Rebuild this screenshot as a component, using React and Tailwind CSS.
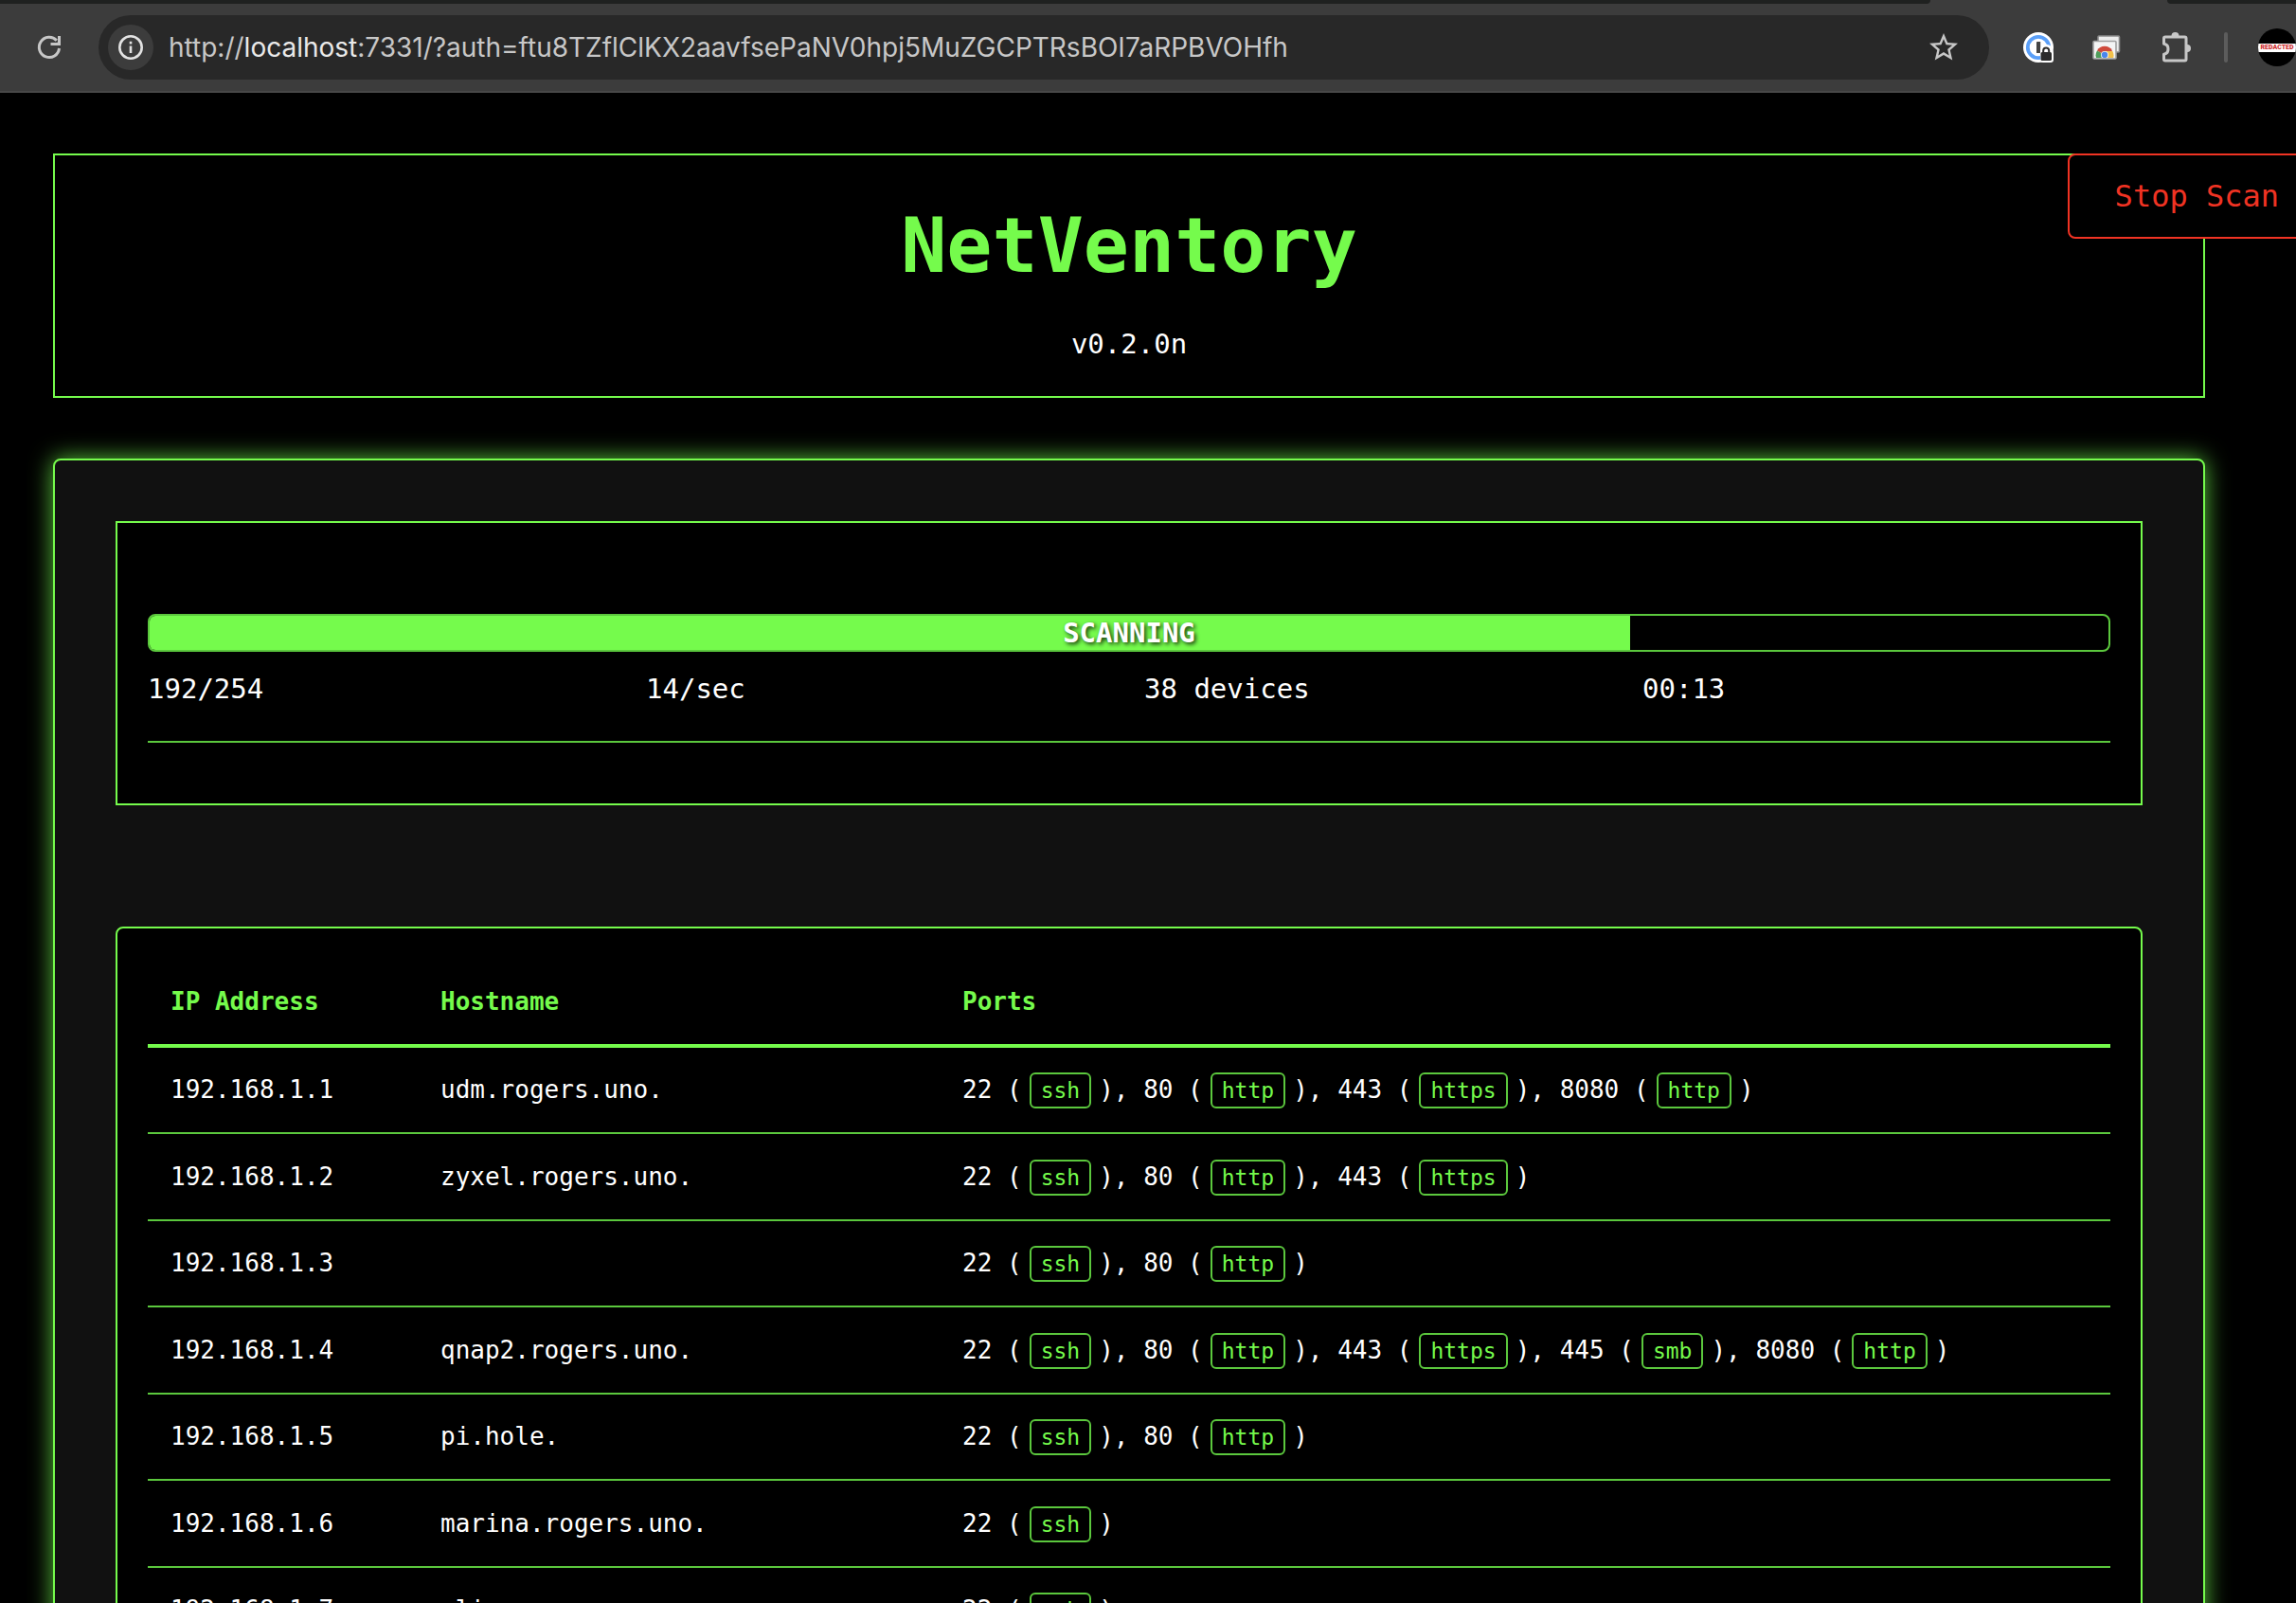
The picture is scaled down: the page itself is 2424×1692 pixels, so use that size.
const GREEN_BADGE =
  "mx-2 rounded-md border-2 border-[#5bc73d] px-2.5 py-1 text-[23px] leading-none text-[#75fb4c]";

const SERVICES = { 22: "ssh", 80: "http", 443: "https", 445: "smb", 8080: "http" };

const DEVICES = [
  { ip: "192.168.1.1", host: "udm.rogers.uno.", ports: [22, 80, 443, 8080] },
  { ip: "192.168.1.2", host: "zyxel.rogers.uno.", ports: [22, 80, 443] },
  { ip: "192.168.1.3", host: "", ports: [22, 80] },
  { ip: "192.168.1.4", host: "qnap2.rogers.uno.", ports: [22, 80, 443, 445, 8080] },
  { ip: "192.168.1.5", host: "pi.hole.", ports: [22, 80] },
  { ip: "192.168.1.6", host: "marina.rogers.uno.", ports: [22] },
  { ip: "192.168.1.7", host: "alice.rogers.uno.", ports: [22] },
];

function ReloadIcon() {
  return (
    <svg viewBox="0 0 32 32" className="size-8" fill="none" stroke="#c7c7c7" strokeWidth="3">
      <path d="M26.500 17A10.600 10.600 0 1 1 23.800 8.800" />
      <path d="M26.500 4v8.500h-9" />
      <path d="M28 4v10H18l3-3h3.500z" fill="#c7c7c7" stroke="none" />
    </svg>
  );
}

function InfoIcon() {
  return (
    <svg viewBox="0 0 28 28" className="size-7" fill="none" stroke="#e3e3e3">
      <circle cx="14" cy="14" r="11.7" strokeWidth="2.6" />
      <path d="M14 12.5v7.5M14 7.8v2.8" strokeWidth="2.6" />
    </svg>
  );
}

function StarIcon() {
  return (
    <svg viewBox="0 0 24 24" className="size-9" fill="#c7c7c7">
      <path d="M22 9.24l-7.19-.62L12 2 9.19 8.63 2 9.24l5.46 4.73L5.82 21 12 17.27 18.18 21l-1.63-7.03L22 9.24zM12 15.4l-3.76 2.27 1-4.28-3.32-2.88 4.38-.38L12 6.1l1.71 4.04 4.38.38-3.32 2.88 1 4.28L12 15.4z" />
    </svg>
  );
}

function PasswordIcon() {
  return (
    <svg viewBox="0 0 32 32" className="size-8">
      <circle cx="16" cy="16" r="16" fill="#fff" />
      <circle cx="16" cy="16" r="11.2" fill="none" stroke="#5a9ff8" strokeWidth="3.8" />
      <rect x="14" y="10" width="4.2" height="12" rx="0.6" fill="#444" />
      <path d="M18 20q0-7 6-7t6.500 5Q32 19 32 22v7q0 3-3 3h-8q-3 0-3-3z" fill="#fff" />
      <rect x="18.500" y="21" width="11.500" height="9" rx="1.600" fill="#2b2b2b" />
      <path d="M21.200 22v-2.600a3 3 0 0 1 6 0V22" fill="none" stroke="#2b2b2b" strokeWidth="2" />
    </svg>
  );
}

function RemoteDesktopIcon() {
  return (
    <svg viewBox="0 0 30 26" className="h-[26px] w-[30px]">
      <defs>
        <clipPath id="screen">
          <rect x="2.500" y="8" width="22" height="16" />
        </clipPath>
      </defs>
      <rect x="6" y="1" width="22.500" height="17" rx="1" fill="#ececec" stroke="#8b8b8b" strokeWidth="1.600" />
      <rect x="1" y="6.500" width="24" height="18.500" rx="1" fill="#f4f4f4" stroke="#a0a0a0" strokeWidth="1.600" />
      <g clipPath="url(#screen)">
        <path d="M13 21 5 16.500A9.200 9.200 0 0 1 21 16.500z" fill="#cf4a3c" />
        <path d="M13 21 5 16.500A9.200 9.200 0 0 0 5 26h5z" fill="#4f9d5b" />
        <path d="M13 17h8.300a9.200 9.200 0 0 1 .5 8H13z" fill="#f2c14b" />
        <circle cx="13" cy="21" r="4" fill="#f4f4f4" />
        <circle cx="13" cy="21" r="3.200" fill="#4a86ec" />
      </g>
    </svg>
  );
}

function ExtensionsIcon() {
  return (
    <svg viewBox="0 0 34 34" className="size-[34px]">
      <path
        d="M4.500 13.200V7.500Q4.500 6 6 6H26.500Q28 6 28 7.500V29.500Q28 31 26.500 31H6Q4.500 31 4.500 29.500V24.200C7.500 23.800 9 21.500 9 18.700S7.500 13.600 4.500 13.200z"
        fill="none"
        stroke="#c7c7c7"
        strokeWidth="3"
        strokeLinejoin="round"
      />
      <path d="M12.500 5a4 4 0 0 1 8 0zM29 14a4 4 0 0 1 0 8z" fill="#c7c7c7" />
    </svg>
  );
}

function BrowserBar() {
  return (
    <header className="shrink-0 border-b-2 border-[#474747] bg-[#3c3c3c] font-[Inter,sans-serif]">
      <div className="flex h-1">
        <div className="flex-1 rounded-br-lg bg-[#1f2120]" />
        <div className="w-[250px]" />
        <div className="w-[136px] rounded-bl-lg bg-[#1f2120]" />
      </div>
      <div className="flex h-[92px] items-center">
        <button aria-label="Reload" className="flex w-[104px] justify-center">
          <ReloadIcon />
        </button>
        <div className="flex h-[68px] flex-1 items-center rounded-full bg-[#282828] pr-[30px] pl-2.5">
          <button
            aria-label="View site information"
            className="flex size-12 items-center justify-center rounded-full bg-[#3c3c3c]"
          >
            <InfoIcon />
          </button>
          <p className="ml-4 flex-1 text-[28px] text-[#c7c7c7]">
            http://<span className="text-[#e9e9e9]">localhost</span>
            :7331/?auth=ftu8TZflClKX2aavfsePaNV0hpj5MuZGCPTRsBOI7aRPBVOHfh
          </p>
          <button aria-label="Bookmark this page">
            <StarIcon />
          </button>
        </div>
        <div className="flex items-center pl-9">
          <button aria-label="Password manager">
            <PasswordIcon />
          </button>
          <button aria-label="Remote desktop" className="ml-[41px]">
            <RemoteDesktopIcon />
          </button>
          <button aria-label="Extensions" className="ml-[41px]">
            <ExtensionsIcon />
          </button>
          <div className="ml-[34px] h-8 w-1 rounded-full bg-[#5c5c5c]" />
          <button
            aria-label="Profile"
            className="ml-8 flex size-10 items-center overflow-hidden rounded-full bg-black"
          >
            <span className="w-full bg-white text-center font-[Roboto,sans-serif] text-[7px] leading-[9px] font-black text-[#d03030]">
              REDACTED
            </span>
          </button>
        </div>
      </div>
    </header>
  );
}

function ScanStatus() {
  const done = 192;
  const total = 254;
  return (
    <section className="border-2 border-[#75fb4c] bg-black px-8 pt-24 pb-16">
      <div className="relative h-10 overflow-hidden rounded-lg border-2 border-[#5bc73d]">
        <div className="h-full bg-[#75fb4c]" style={{ width: `${(done / total) * 100}%` }} />
        <div className="absolute inset-0 flex items-center justify-center font-bold [text-shadow:2px_2px_4px_rgba(0,0,0,0.8)]">
          SCANNING
        </div>
      </div>
      <div className="grid grid-cols-4 gap-8 border-b-2 border-[#5bc73d] pt-4 pb-8">
        <div>
          {done}/{total}
        </div>
        <div>14/sec</div>
        <div>38 devices</div>
        <div>00:13</div>
      </div>
    </section>
  );
}

function Ports({ ports }) {
  return ports.map((port, i) => (
    <span key={port}>
      {i > 0 && ", "}
      {port} (<span className={GREEN_BADGE}>{SERVICES[port]}</span>)
    </span>
  ));
}

function DeviceTable() {
  return (
    <section className="mt-32 rounded-lg border-2 border-[#75fb4c] bg-black p-8">
      <table className="w-full table-fixed border-separate border-spacing-0 text-left text-[26px] leading-[41px]">
        <thead>
          <tr className="h-[94px] text-[#75fb4c]">
            <th className="w-[285px] border-b-4 border-[#75fb4c] px-6">IP Address</th>
            <th className="w-[551px] border-b-4 border-[#75fb4c] px-6">Hostname</th>
            <th className="border-b-4 border-[#75fb4c] px-6">Ports</th>
          </tr>
        </thead>
        <tbody>
          {DEVICES.map(({ ip, host, ports }) => (
            <tr key={ip} className="odd:h-[91px] even:h-[92px]">
              <td className="border-b-2 border-[#5bc73d] px-6">{ip}</td>
              <td className="border-b-2 border-[#5bc73d] px-6">{host}</td>
              <td className="border-b-2 border-[#5bc73d] px-6">
                <Ports ports={ports} />
              </td>
            </tr>
          ))}
        </tbody>
      </table>
    </section>
  );
}

export default function App() {
  return (
    <div className="flex h-screen flex-col overflow-hidden bg-black">
      <BrowserBar />
      <main className="relative flex-1 overflow-hidden pt-16 pr-24 pl-14 font-['DejaVu_Sans_Mono',monospace] text-[29px] leading-[46px] text-white">
        <div className="border-2 border-[#75fb4c] py-8 text-center">
          <h1 className="text-[80px] leading-[128px] font-bold text-[#75fb4c]">NetVentory</h1>
          <p className="mt-4">v0.2.0n</p>
        </div>
        <button className="absolute top-16 -right-8 rounded-lg border-2 border-[#f03323] bg-black px-12 py-6 text-[32px] leading-[38px] text-[#f03323]">
          Stop Scan
        </button>
        <div className="mt-16 rounded-lg border-2 border-[#75fb4c] bg-[#111111] p-16 shadow-[0_0_24px_#5bc73d]">
          <ScanStatus />
          <DeviceTable />
        </div>
      </main>
    </div>
  );
}
